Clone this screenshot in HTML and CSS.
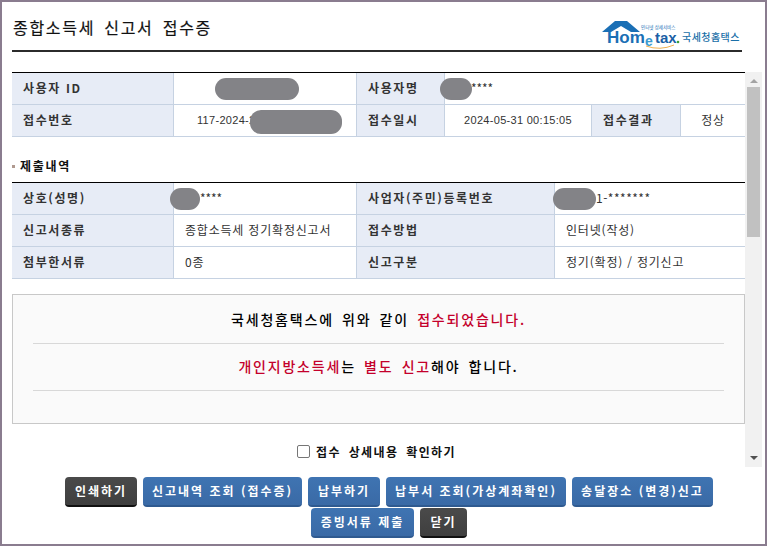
FILE: index.html
```html
<!DOCTYPE html>
<html lang="ko">
<head>
<meta charset="utf-8">
<title>종합소득세 신고서 접수증</title>
<link rel="stylesheet" href="styles.css">
</head>
<body>
<div class="frame">
  <header class="head">
    <h1 class="title">종합소득세 신고서 접수증</h1>
    <svg class="logo" width="140" height="33" viewBox="0 0 140 33">
      <path d="M0 15 L13 4 L25 4 L38 15 L29 15 L19 9 L9 15 Z" fill="#1a6fb5"/>
      <text x="5" y="26" class="logo-home">Hom</text>
      <text x="43" y="29" class="logo-e">e</text>
      <text x="53" y="26" class="logo-tax">tax</text>
      <circle cx="76" cy="25" r="1.3" fill="#3f9f3a"/>
      <path d="M44 29 Q58 34 72 28" fill="none" stroke="#efb050" stroke-width="1"/>
      <text x="39" y="12" class="logo-small">인터넷 상세서비스</text>
      <text x="80" y="24" class="logo-kr">국세청홈택스</text>
    </svg>
  </header>
  <div class="viewport">
    <main class="content">
      <table class="grid">
        <colgroup><col class="c1"><col class="c2"><col class="c3"><col class="c4"><col class="c5"><col class="c6"></colgroup>
        <tr><th class="left">사용자 ID</th><td></td><th class="left">사용자명</th><td colspan="3" class="plain offset">****</td></tr>
        <tr><th class="left">접수번호</th><td class="num start">117-2024-2</td><th class="left">접수일시</th><td class="num center">2024-05-31 00:15:05</td><th class="left">접수결과</th><td class="center">정상</td></tr>
      </table>
      <h2 class="section"><span class="mark"></span>제출내역</h2>
      <table class="grid second">
        <colgroup><col class="c1"><col class="c2"><col class="d3"><col class="d4"></colgroup>
        <tr><th class="left">상호(성명)</th><td class="plain offset">****</td><th class="left">사업자(주민)등록번호</th><td class="plain offset3">1-*******</td></tr>
        <tr><th class="left">신고서종류</th><td class="plain">종합소득세 정기확정신고서</td><th class="left">접수방법</th><td class="plain">인터넷(작성)</td></tr>
        <tr><th class="left">첨부한서류</th><td class="plain">0종</td><th class="left">신고구분</th><td class="plain">정기(확정) / 정기신고</td></tr>
      </table>
      <section class="notice">
        <p class="msg">국세청홈택스에 위와 같이 <em>접수되었습니다.</em></p>
        <p class="msg"><em>개인지방소득세</em>는 <em>별도 신고</em>해야 합니다.</p>
      </section>
      <label class="confirm"><span class="box"></span>접수 상세내용 확인하기</label>
      <span class="blob b1"></span><span class="blob b2"></span><span class="blob b3"></span><span class="blob b4"></span><span class="blob b5"></span>
    </main>
    <div class="scrollbar">
      <span class="arrow up"></span>
      <span class="thumb"></span>
      <span class="arrow down"></span>
    </div>
  </div>
  <nav class="actions">
    <button class="btn dark">인쇄하기</button>
    <button class="btn w159">신고내역 조회 (접수증)</button>
    <button class="btn">납부하기</button>
    <button class="btn w180">납부서 조회(가상계좌확인)</button>
    <button class="btn w141">송달장소 (변경)신고</button>
    <button class="btn w103">증빙서류 제출</button>
    <button class="btn dark w47">닫기</button>
  </nav>
</div>
</body>
</html>
```
FILE: styles.css
```css
* { box-sizing: border-box; }
html, body { margin: 0; padding: 0; }
body {
  width: 767px;
  height: 546px;
  overflow: hidden;
  background: #fff;
  font-family: "Noto Sans CJK KR", "Liberation Sans", sans-serif;
  color: #222;
}
.frame {
  width: 767px;
  height: 546px;
  border: 2px solid #8a7c8f;
  background: #fff;
  padding: 0 0 0 10px;
  display: flex;
  flex-direction: column;
}
.head {
  width: 730px;
  height: 50px;
  border-bottom: 2px solid #2b2b2b;
  display: flex;
  justify-content: space-between;
  align-items: flex-start;
  flex: none;
}
.title {
  margin: 13px 0 0 1px;
  font-size: 16px;
  line-height: 24px;
  font-weight: 400;
  letter-spacing: 1.7px;
  word-spacing: 3px;
  color: #111;
  -webkit-text-stroke: 0.2px #111;
}
.logo { margin: 15px 0 0 0; flex: none; }
.logo-home { font: 700 17px "Liberation Sans", sans-serif; fill: #1a6fb5; }
.logo-e { font: 700 14px "Liberation Sans", sans-serif; fill: #3b9ad0; }
.logo-tax { font: 700 15px "Liberation Sans", sans-serif; fill: #1a5fa5; }
.logo-small { font: 400 4.5px "Noto Sans CJK KR", sans-serif; fill: #1a6fb5; }
.logo-kr { font: 500 10px "Noto Sans CJK KR", sans-serif; fill: #1a6fa8; letter-spacing: .45px; }
.viewport {
  margin-top: 20px;
  height: 395px;
  display: flex;
  flex: none;
}
.content {
  position: relative;
  width: 733px;
  height: 395px;
  overflow: hidden;
  flex: none;
}
.grid {
  width: 733px;
  table-layout: fixed;
  border-collapse: separate;
  border-spacing: 0;
  border-top: 1px solid #000;
}
.c1 { width: 162px; }
.c2 { width: 183px; }
.c3 { width: 88px; }
.c4 { width: 147px; }
.c5 { width: 89px; }
.c6 { width: 64px; }
.d3 { width: 198px; }
.d4 { width: 190px; }
.grid th, .grid td {
  height: 32px;
  padding: 0 0 2px;
  border-bottom: 1px solid #c6d2e2;
  border-right: 1px solid #c6d2e2;
  font-size: 12px;
}
.grid tr > :last-child { border-right: 0; }
.grid th {
  background: #e7ecf6;
  font-weight: 700;
  color: #333;
  font-size: 12px;
  letter-spacing: 1.6px;
}
.grid th.left { text-align: left; padding-left: 11px; }
.grid td { font-weight: 400; color: #333; letter-spacing: .8px; }
.center { text-align: center; }
.grid td.start { text-align: left; padding-left: 23px; }
.grid td.plain { padding-left: 11px; }
.grid td.offset { padding-left: 26px; letter-spacing: -.1px; }
.grid td.offset3 { padding-left: 41px; letter-spacing: .5px; }
.grid td.num { font-family: "Liberation Sans", "Noto Sans CJK KR", sans-serif; font-size: 11px; letter-spacing: .3px; }
.section {
  margin: 0;
  height: 45px;
  padding-top: 13px;
  font-size: 12px;
  line-height: 18px;
  font-weight: 700;
  color: #111;
  letter-spacing: 1.7px;
  display: flex;
  align-items: center;
}
.mark { width: 3px; height: 3px; background: #b09a90; margin-right: 5px; }
.notice {
  margin-top: 15px;
  width: 733px;
  height: 130px;
  border: 1px solid #c8c8c8;
  background: #fafafa;
  padding: 2px 20px 0;
}
.msg {
  margin: 0;
  height: 47px;
  border-bottom: 1px solid #d8d8d8;
  text-align: center;
  font-size: 14px;
  line-height: 45px;
  font-weight: 500;
  color: #000;
  letter-spacing: 1.8px;
  word-spacing: 2.5px;
}
.msg em { font-style: normal; color: #c4002b; }
.confirm {
  display: flex;
  justify-content: center;
  align-items: center;
  height: 20px;
  margin-top: 17px;
  padding-right: 4px;
  font-size: 12px;
  font-weight: 700;
  color: #111;
  letter-spacing: 1.4px;
  word-spacing: 3px;
}
.box {
  width: 13px;
  height: 13px;
  border: 1px solid #767676;
  border-radius: 2px;
  background: #fff;
  margin-right: 6px;
}
.blob { position: absolute; background: #838387; }
.b1 { left: 203px; top: 6px; width: 84px; height: 22px; border-radius: 11px; }
.b2 { left: 238px; top: 38px; width: 92px; height: 24px; border-radius: 11px; }
.b3 { left: 428px; top: 6px; width: 32px; height: 22px; border-radius: 11px; }
.b4 { left: 158px; top: 116px; width: 30px; height: 22px; border-radius: 11px; }
.b5 { left: 541px; top: 116px; width: 43px; height: 22px; border-radius: 11px; }
.scrollbar {
  width: 17px;
  height: 395px;
  background: #f1f1f1;
  flex: none;
  display: flex;
  flex-direction: column;
  align-items: center;
}
.thumb { width: 13px; height: 150px; background: #c1c1c1; margin-top: 4px; }
.arrow { width: 0; height: 0; border-left: 4px solid transparent; border-right: 4px solid transparent; }
.arrow.up { border-bottom: 4px solid #a3a3a3; margin-top: 7px; }
.arrow.down { border-top: 4px solid #505050; margin-top: auto; margin-bottom: 7px; }
.actions {
  width: 700px;
  margin: 10px 0 0 27px;
  display: flex;
  flex-wrap: wrap;
  justify-content: center;
  gap: 1px 6px;
}
.btn {
  height: 30px;
  width: 72px;
  padding: 0 0 2px;
  border: 0;
  border-radius: 4px;
  border-bottom: 2px solid #2f5a90;
  background: linear-gradient(#3f74b2, #3a6aa6);
  color: #fff;
  font-family: inherit;
  font-size: 12px;
  font-weight: 700;
  letter-spacing: 2px;
  word-spacing: 0;
}
.dark { background: linear-gradient(#4a4a4a, #3f3f3f); border-bottom-color: #111; }
.w159 { width: 159px; }
.w180 { width: 180px; }
.w141 { width: 141px; }
.w103 { width: 103px; }
.w47 { width: 47px; }
```
